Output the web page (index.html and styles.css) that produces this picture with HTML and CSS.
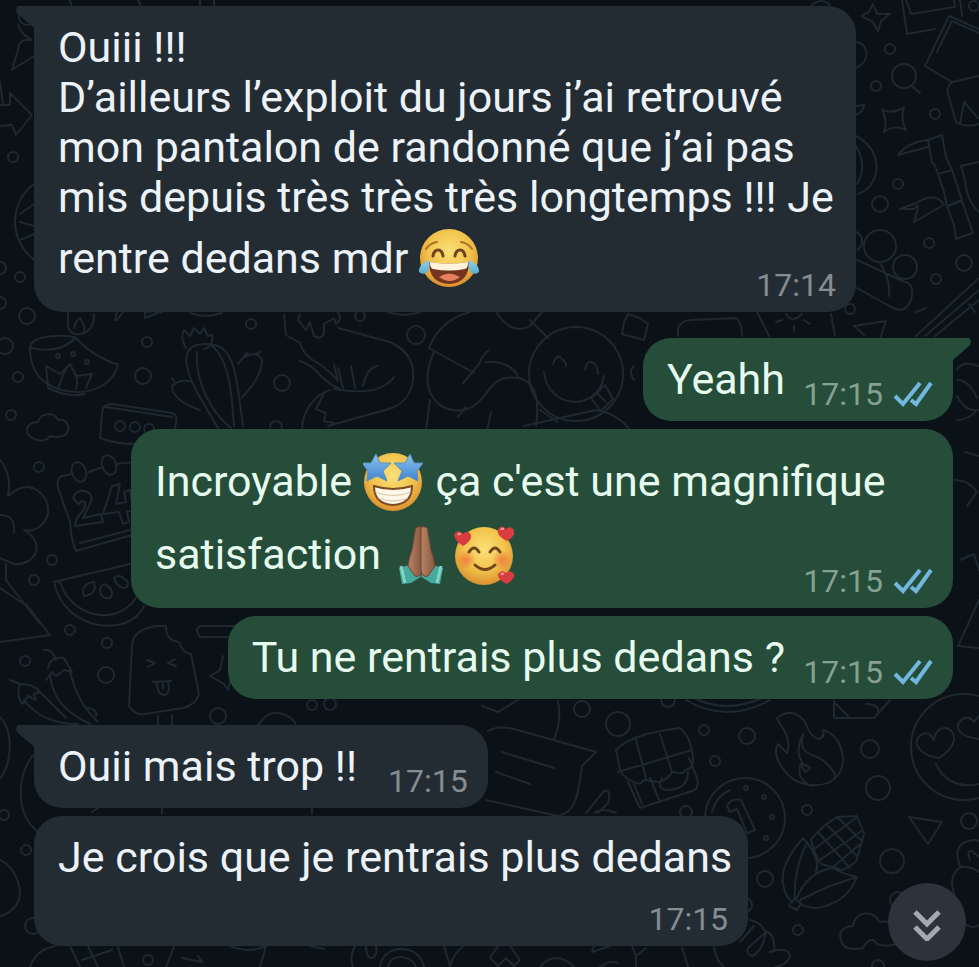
FILE: index.html
```html
<!DOCTYPE html>
<html lang="fr">
<head>
<meta charset="utf-8">
<meta name="viewport" content="width=device-width, initial-scale=1">
<title>Discussion</title>
<link rel="stylesheet" href="styles.css">
</head>
<body>
<svg class="wallpaper" viewBox="0 0 979 967" preserveAspectRatio="xMinYMin slice" aria-hidden="true">
  <!-- scattered dots -->
  <g>
    <circle cx="27" cy="17" r="8"/><circle cx="13" cy="157" r="5"/><circle cx="20" cy="277" r="5"/><circle cx="0" cy="268" r="6"/><circle cx="0" cy="303" r="6"/>
    <circle cx="27" cy="316" r="8"/><circle cx="5" cy="346" r="8"/><circle cx="147" cy="342" r="5"/><circle cx="143" cy="376" r="8"/><circle cx="18" cy="377" r="5"/>
    <circle cx="11" cy="415" r="5"/><circle cx="39" cy="467" r="5"/><circle cx="251" cy="324" r="5"/><circle cx="282" cy="383" r="8"/><circle cx="276" cy="427" r="6"/>
    <circle cx="52" cy="560" r="5"/><circle cx="34" cy="580" r="5"/><circle cx="70" cy="630" r="5"/><circle cx="107" cy="643" r="5"/><circle cx="25" cy="661" r="5"/>
    <circle cx="106" cy="675" r="8"/><circle cx="218" cy="716" r="8"/><circle cx="312" cy="705" r="5"/><circle cx="330" cy="704" r="6"/><circle cx="4" cy="815" r="5"/>
    <circle cx="26" cy="850" r="5"/><circle cx="33" cy="926" r="8"/><circle cx="148" cy="960" r="5"/><circle cx="360" cy="316" r="5"/><circle cx="416" cy="335" r="9"/>
    <circle cx="890" cy="49" r="5"/><circle cx="876" cy="86" r="5"/><circle cx="935" cy="114" r="5"/><circle cx="974" cy="6" r="5"/><circle cx="898" cy="184" r="5"/>
    <circle cx="880" cy="204" r="8"/><circle cx="929" cy="243" r="5"/><circle cx="964" cy="263" r="8"/><circle cx="936" cy="279" r="5"/><circle cx="850" cy="309" r="5"/>
    <circle cx="880" cy="246" r="16"/><circle cx="905" cy="267" r="12"/>
    <circle cx="582" cy="709" r="8"/><circle cx="618" cy="724" r="12"/><circle cx="704" cy="730" r="5"/><circle cx="747" cy="736" r="8"/><circle cx="715" cy="761" r="5"/>
    <circle cx="870" cy="749" r="9"/><circle cx="878" cy="788" r="12"/><circle cx="807" cy="810" r="5"/><circle cx="969" cy="821" r="8"/><circle cx="892" cy="861" r="12"/>
    <circle cx="765" cy="879" r="8"/><circle cx="798" cy="930" r="5"/><circle cx="686" cy="812" r="6"/><circle cx="745" cy="905" r="7"/><circle cx="668" cy="700" r="7"/>
    <circle cx="878" cy="966" r="6"/><circle cx="898" cy="900" r="8"/>
  </g>
  <!-- left edge, top -->
  <path d="M18 24q2 10 14 16M32 40q-14-2-14 10l-6 20 6-4q10-6 16-10M0 105l10 0 0-12 22 22-16 20-4-10-12 1M0 82l3 22M34 184c-20 14-30 50 0 76M34 204l-14 10m0 26 14-6M20 222l14 4"/>
  <path d="M70 0l2 8m66-8 4 8M200 0v8m14-8v8M812 5q10-8 18 0"/>
  <!-- bowl with lotus -->
  <path d="M30 348c0-14 40-14 46-10 18 20 40 26 42 26-4 20-24 28-40 28-22 0-48-10-48-44zM31 348q30 6 44-10M48 388l-2-22 14 8 10-10 6 12 16-2-6 14M58 389q8-24 12-24 10 12 6 24M48 388q20 10 36 6M68 312v14q3 10 12 8 14-2 14-20M74 328q2-8 6-10 6 8 4 14"/>
  <circle cx="58" cy="356" r="2"/><circle cx="73" cy="354" r="2"/><circle cx="87" cy="362" r="2"/>
  <!-- cloud, cassette -->
  <path d="M28 434c-4-10 6-12 10-12 2-10 18-10 20-2 12-2 14 14 4 16q-8 2-12 0c-6 8-18 4-22-2zM102 414q0-10 10-10l60 9q6 2 4 10l-4 18M102 414l-2 24q16 6 34 6M106 407l66 10"/>
  <circle cx="120" cy="426" r="5"/><circle cx="135" cy="427" r="5"/><circle cx="149" cy="429" r="5"/>
  <path d="M115 320l2-8m6 0-6 8m28-2 18-7-18 1zM190 313q14 6 32 0"/>
  <!-- cactus -->
  <path d="M186 348q-6-10-2-18l6 6 4-8 6 6 4-6 4 8 4-1q2 12-8 14M219 430l-22-38c-18-34-12-48 8-48 28 0 30 20 38 82M197 352c-2 30 14 60 34 76M212 346c20 16 20 60 22 80M192 382q-12-4-20 4c0 12 16 20 28 24M238 364c6-10 20-14 24-4 0 16-12 28-20 38M176 384l-4-6m72-22 4-4m8 2 4-2"/>
  <!-- calendar -->
  <path d="M72 474l-10 2q-6 3-4 12l12 34q1 18 6 29l56-16M80 543l54-14M89 472l14-5m13-3 18-2"/>
  <ellipse cx="79" cy="472" rx="7" ry="10" transform="rotate(-20 79 472)"/><ellipse cx="109" cy="465" rx="7" ry="10" transform="rotate(-20 109 465)"/>
  <path d="M73 498c4-12 22-8 18 4l-8 16 18-4 2 8-28 4c0-12 12-14 10-24q-4-2-6 2zM112 486l8-2-4 20 10-2-2-10 6-2 3 20-6 2 2 10-6 2-4-12-16 2z"/>
  <!-- clover and watermelon -->
  <path d="M0 460q12 14 8 36 22-20 38 4c8 20-10 34-22 30 24 14 10 36-10 34-6-2-14-6-14-6M0 515q16 0 14 18M6 564v16l34 44M0 588l24 16M54 582l76-18M54 582c10 50 76 56 90 24M60 582c10 34 56 46 76 16"/>
  <path d="M84 596q-4-12 10-14 4 12-10 14zM104 598q-8-8 0-14 12 6 6 14zM114 578q4-6 14 4 0 6-4 6-8-2-10-10zM26 604l24 31-50 7"/>
  <!-- peppers -->
  <path d="M44 650q8-2 12 10M48 668q2-12 16-10l8 14-8-2-8 6-4-4-6 8M50 674c2 30 24 42 40 50M70 672c8 30 18 40 28 50M10 680l10 4q14 0 20 8l-6 2 2 6-8-4-6 8q-6-10-2-20M24 700c12 16 30 24 54 24M40 692q14 14 26 26M88 708q10 2 8 8"/>
  <!-- ice lolly -->
  <path d="M166 626h-10q-24 4-24 20l-3 60q6 10 16 8l38-6q14-4 16-14l-8-40q-8 0-12-12-14-2-13-16M158 716v9m14-10v10M147 660l8 3-7 4m27-8-7 4 8 3M153 682l18-1M157 683q0 12 8 12 6-2 3-13M163 684v5"/>
  <path d="M234 626h-34q-6 4 0 11h34M223 656l-3 14-10 6 14 8 4 6 4-14M258 725q10-14 20-12 14 2 18 12"/>
  <!-- large rings near the lower left -->
  <path d="M0 717c14 14 12 46 0 62M33 755c-18 24-16 60 4 76M0 860c14 6 24 28 18 42-4 8-10 12-18 14M162 808v6m150-6v6M92 812l6-4"/>
  <path d="M30 967q6-18 26-21M70 946l10 21m8-21 10 21m20-20 6 20M82 960l30-10M166 967l8-20M182 958l20 4-4-6M230 946q20 8 36 0l-6 21M310 946l14 3M355 946q-6 10-2 21M366 946q0 12 6 12 6-2 4-12M380 967q2-16 20-18 20 0 24 18M388 967q2-10 12-10 12 0 16 10M444 946l6 20q4-14 14-20"/>
  <!-- flexed arm -->
  <path d="M284 315l2 20 14 8q4 14 18 20 14 10 20 18l-4-16M300 314l-2 6 8 10 4-8 4 14q6 4 10-2v-10l10-6 2 6q8-6 0-14M338 328l52 14c22 10 26 26 22 44-4 12-10 18-20 22l-64 18M300 361q12 4 20 14 10 10 20 14M338 368l5 20m8-22 4 22m8-2q4-18 14-20M334 389q46 8 60-12M330 390c-14 4-28 20-28 40M324 393l-8 16 10 4-2 8 10 2"/>
  <!-- fortune cookie -->
  <path d="M470 312q-30 8-41 36l45 25M463 383l16-19q4-10 10-14M434 352c-18 40 6 62 28 58 22-2 26-30 44-32 30-4 34 20 30 48M486 362c16-2 30 6 32 16M430 400l-4 30M458 417l8-10M491 412l-4 18M388 312q16 6 32 0M496 312q16 24 34 14l12-14M530 320l18 18M540 410l18 12"/>
  <!-- winking face -->
  <circle cx="576" cy="374" r="47"/><path d="M553 364q4-12 10-4 4 4 3 6M585 370q2-12 10-6 3 4 3 10M544 372c4 38 54 40 60 4M591 398l14-13 8 14-12 12zM598 394l8 8M524 426l72-16q22 4 34 20M624 322l4-8 12 4 8 6-4 16-22-6zM634 366q-6 4 0 14"/>
  <path d="M678 336v-8q4-8 14-8l44-2q6 4 6 18M757 312l12 24m62-22 4 22M854 326l32-5-6 18m-16-4-10-9M786 314q6 10 16 0m-20 6-6 2m18 4v5m10-11 6 4"/>
  <!-- photos and sparkles, top right -->
  <path d="M873 4l4 10 13 0-9 7-3 10-5-9-12-6 8-4zM902 0l5 34 28-5M906 0l5 14 44-7-1-7M960 0l2 16M925 66l24-50 30 13M937 52l15-31 27 12M925 66l27 16 27-6M952 82q-6 6-4 12l8 28q10 6 23 2M960 124l4-22 14 16"/>
  <circle cx="904" cy="76" r="12"/><path d="M912 86l8 7M882 110q10 4 22-2-4 12 2 22-12-6-22 2 4-12-2-22z"/>
  <path d="M856 42c14 2 14 20 0 26M856 106l8-1q0 6-8 10M856 136c28 14 26 50 2 58M856 146q12 20 1 38M857 232q10 8 1 18M857 260l48 22q10 2 6 18-6 14-18 8l-36-20M879 262q12 16 10 34"/>
  <!-- bamboo -->
  <path d="M928 140l14-5 4 22 6 13-14 4q-2-8-6-12zM938 174l14-4 10 30-15 6-3-14zM947 206l15-5 11 32-17 6-2-14zM928 140q-20 2-30 15l30-8M944 205q-8-14-28-2l-16 6 14 0 4-4M914 222l28-16M914 222l4-14M979 162l-18 4 4 14q2 22 14 32"/>
  <path d="M916 336l63-58m-54 58 54-46m-44 46 44-36m-10 4 6 8M916 312l10-4"/>
  <path d="M979 366q-18-6-22 4M957 396q8 16 22 14M957 380q12 0 20 18M957 420q12 0 20-10M965 452l14 4M955 480q14 0 22 12l-10 14M960 560l14-6 5 16M979 600l-21 46 21 2"/>
  <!-- whale tail -->
  <path d="M488 731q10-6 26-2l82 23-14 14c-4 30-6 46-24 50l-72-16M502 752l52 16m-58 4 34 12M558 701q4 20-4 38M482 706l16 6 20-12M586 813l18-22q8-2 4 12l-10 10m-4 0q8-6 22 0"/>
  <!-- gift box -->
  <path d="M616 750q14-16 64-22 12 10 13 32 0 8-7 10-3 5-14 2-4 8-14 10l-14-2-4 4q-16-4-20-14zM618 772l74-22M636 740l10 38m14-44 12 38M628 782l12 26 55-18q4-4 2-12l-8-20M650 778l10 24M662 778q-6 10 4 12 22 0 22-18M634 784l8 20"/>
  <!-- coin -->
  <circle cx="745" cy="818" r="40"/><path d="M712 812q4-16 18-22M727 806q4-8 14-6l14 30-8 3-10-24-7 3z"/><circle cx="746" cy="788" r="2"/><circle cx="764" cy="797" r="2"/><circle cx="772" cy="817" r="2"/><circle cx="766" cy="838" r="2"/><path d="M686 700q40 24 84 0M696 699q30 14 64 0"/>
  <!-- flame -->
  <path d="M777 718q16-12 28 4 6 16 14 17 6-2 4-9c20 6 24 32 16 44-12 16-38 14-52 0-10-12-14-22-9-30l9 9c6-16-8-28-10-35zM803 734c-6 24 14 18 24 30q10 10 8 14M803 734c-6 14-6 20 0 30l8 4-6 4-4-8q-6 14 10 22"/>
  <path d="M834 700v18h40l16-18M866 704q14 0 12 10M836 704l12 12"/>
  <!-- heart-eyed face -->
  <circle cx="964" cy="747" r="53"/><path d="M939 758c-16-2-30-14-18-23q8-5 13 5c2-18 22-14 20 0q-2 10-15 18zM979 739c-18-2-26-10-18-19q8-5 13 2l5-6M936 764c8 18 24 24 43 20"/>
  <!-- corn -->
  <path d="M811 839l14-14 12-8 20-1 7 18-8 28-13 8-22-6q-8-12-10-25zM818 832l32 36M826 824l31 32M837 817l25 24M813 850l44-33M817 862l46-32M832 868l28-24M803 838q-26 30-19 50 2 10 9 14M803 838q18 20 13 34M807 842q-14 30-12 58M797 898q10-26 36-30 10 6 24 9-10 26-40 31-10 0-17-4M800 900q16-8 30-14l27-9M794 899l7 4-4 7-8-4z"/>
  <path d="M909 817l33 5-14 22zM960 866q-8-20 8-25 8-2 11 0M970 860q-4-10 2-9l7 6M960 867q-12 10-6 26M979 872q-8-6-19-5M966 925q8 4 13 0M841 940c-4-12 8-14 12-14 2-16 22-16 26-4 8-2 14 2 16 6M841 940q2 12 22 8 8-14 14-4 14 4 22-2"/>
  <!-- hand, lower edge -->
  <path d="M750 920q10 2 14 10 10 4 10 14 2 8-4 8 18-6 20 4-2 8-14 11M740 942l14-16m-6 22 18-16q-4 20-14 24-6-2-4-8M714 947q2 14 10 20M682 947l6 20M594 946l-2 6 18-6M632 946l4 10 10-8M636 956v11M490 958l8-12m12 0 10 14-6 6-8-8-8 8-8-8M540 967q16-18 34 0M600 967q10-8 18-4"/>
</svg>

<main class="chat">
  <section class="group incoming">
    <article class="bubble tailed">
      <svg class="tail" viewBox="0 0 18 22" aria-hidden="true"><path d="M18 0H2Q-1 2 1 7L18 22z"/></svg>
      <p class="text">Ouiii !!!<br>D’ailleurs l’exploit du jours j’ai retrouvé mon pantalon de randonné que j’ai pas mis depuis très très très longtemps !!! Je rentre dedans mdr
        <svg class="emoji" viewBox="0 0 60 60" role="img" aria-label="😂">
          <defs>
            <radialGradient id="face" cx="50%" cy="38%" r="65%"><stop offset="0" stop-color="#fbe078"/><stop offset=".55" stop-color="#f2c44d"/><stop offset="1" stop-color="#d98a2b"/></radialGradient>
            <linearGradient id="tear" x1="0" y1="0" x2="0" y2="1"><stop offset="0" stop-color="#8fd0e6"/><stop offset="1" stop-color="#5aaed0"/></linearGradient>
          </defs>
          <circle cx="30" cy="29" r="29" fill="url(#face)"/>
          <path d="M7 20q4-6 11-7M42 13q7 1 11 7" fill="none" stroke="#a87329" stroke-width="2" stroke-linecap="round"/>
          <path d="M14 27q1-6 5-6t5 6M36 27q1-6 5-6t5 6" fill="none" stroke="#70441c" stroke-width="3" stroke-linecap="round"/>
          <path d="M10 33q20 3 40 0 0 21-20 22-20-1-20-22z" fill="#74341f"/>
          <path d="M11 33q19 3 38 0 0 6-3 7-16 3-32 0-3-1-3-7z" fill="#fff3dc"/>
          <path d="M20 48q10-7 21 0-10 8-21 0z" fill="#e5805c"/>
          <path d="M10 31q2 9-3 13-4 2-7-1-1-7 10-12zM50 31q-2 9 3 13 4 2 7-1 1-7-10-12z" fill="url(#tear)"/>
        </svg><span class="reserve"></span></p>
      <time class="stamp">17:14</time>
    </article>
  </section>

  <section class="group outgoing">
    <article class="bubble tailed">
      <svg class="tail" viewBox="0 0 18 22" aria-hidden="true"><path d="M0 0H16Q19 2 17 7L0 22z"/></svg>
      <p class="text">Yeahh<span class="reserve"></span></p>
      <div class="stamp"><time>17:15</time><svg class="ticks" viewBox="0 0 40 26" role="img" aria-label="Lu"><path d="M2 15l8 8L27 2M18 19l5 4L38 2"/></svg></div>
    </article>
    <article class="bubble">
      <p class="text">Incroyable
        <svg class="emoji" viewBox="0 0 60 60" role="img" aria-label="🤩">
          <defs><linearGradient id="star" x1="0" y1="0" x2="0" y2="1"><stop offset="0" stop-color="#8cc4ee"/><stop offset="1" stop-color="#3f83cf"/></linearGradient></defs>
          <circle cx="30" cy="30" r="29" fill="url(#face)"/>
          <path d="M11 34q19 6 38 0 0 18-19 19-19-1-19-19z" fill="#fff8ea" stroke="#7b4a20" stroke-width="2"/>
          <path d="M12 40q18 7 36 0M15 46q15 6 30 0" fill="none" stroke="#d9c5a6"/>
          <path d="M13 2l4 9 11 0-8 8 4 10-10-5-10 5 1-10-6-8 9 0z" fill="url(#star)" stroke="#5b91ba"/>
          <path d="M47 2l4 9 9 0-6 8 1 10-10-5-10 5 4-10-8-8 11 0z" fill="url(#star)" stroke="#5b91ba"/>
        </svg>
        ça c'est une magnifique satisfaction
        <svg class="emoji" viewBox="0 0 60 60" role="img" aria-label="🙏🏽">
          <defs><linearGradient id="skin" x1="0" x2="1"><stop offset="0" stop-color="#b98467"/><stop offset="1" stop-color="#87573f"/></linearGradient></defs>
          <path d="M7 43l10-3 13 11-11 7-9 1zM51 43l-10-3-13 11 11 7 9 1z" fill="#45a99b"/>
          <path d="M30 4q-1-4-4-2-3 0-3 5l-3 18q-3 7-4 16l7 10q6 2 7-6z" fill="url(#skin)" stroke="#6c4432"/>
          <path d="M29 4q1-4 4-2 3 0 3 5l3 18q3 7 4 16l-7 10q-6 2-7-6z" fill="url(#skin)" stroke="#6c4432"/>
          <path d="M9 41l4 17M49 41l-4 17" stroke="#83d4c4" stroke-width="3"/>
        </svg><svg class="emoji" viewBox="0 0 60 60" role="img" aria-label="🥰">
          <defs><radialGradient id="blush"><stop offset="0" stop-color="#f0713a" stop-opacity=".8"/><stop offset="1" stop-color="#f0713a" stop-opacity="0"/></radialGradient></defs>
          <circle cx="30" cy="31" r="29" fill="url(#face)"/>
          <circle cx="12" cy="35" r="10" fill="url(#blush)"/><circle cx="48" cy="35" r="10" fill="url(#blush)"/>
          <path d="M15 27q5-8 10 0M36 27q5-8 10 0M21 40q10 9 20 0" fill="none" stroke="#70441c" stroke-width="3" stroke-linecap="round"/>
          <g fill="#d83c3f"><path d="M9 21Q-2 14 1 8q4-4 8 1 5-5 8 1 1 6-8 11z"/><path d="M53 16q-11-5-9-12 4-5 8 0 5-4 8 1 2 6-7 11z"/><path d="M53 59q-10-5-9-10 4-5 8-1 5-4 8 1 1 5-7 10z"/></g>
          <path d="M4 10q1-2 3-1M47 5q1-2 3-1M47 50q1-2 3-1" fill="none" stroke="#f59a93" stroke-width="2"/>
        </svg><span class="reserve"></span></p>
      <div class="stamp"><time>17:15</time><svg class="ticks" viewBox="0 0 40 26" role="img" aria-label="Lu"><path d="M2 15l8 8L27 2M18 19l5 4L38 2"/></svg></div>
    </article>
    <article class="bubble">
      <p class="text">Tu ne rentrais plus dedans ?<span class="reserve"></span></p>
      <div class="stamp"><time>17:15</time><svg class="ticks" viewBox="0 0 40 26" role="img" aria-label="Lu"><path d="M2 15l8 8L27 2M18 19l5 4L38 2"/></svg></div>
    </article>
  </section>

  <section class="group incoming">
    <article class="bubble tailed">
      <svg class="tail" viewBox="0 0 18 22" aria-hidden="true"><path d="M18 0H2Q-1 2 1 7L18 22z"/></svg>
      <p class="text">Ouii mais trop !!&nbsp;<span class="reserve"></span></p>
      <time class="stamp">17:15</time>
    </article>
    <article class="bubble stacked">
      <p class="text">Je crois que je rentrais plus dedans</p>
      <time class="stamp">17:15</time>
    </article>
  </section>
</main>

<button class="jump" type="button" aria-label="Aller aux derniers messages">
  <svg viewBox="0 0 28 32" aria-hidden="true"><path d="M2 3l12 12L26 3M2 18l12 12 12-12"/></svg>
</button>
</body>
</html>
```

FILE: styles.css
```css
* {
  box-sizing: border-box;
}

body {
  margin: 0;
  min-height: 100vh;
  overflow: hidden;
  position: relative;
  background: #0a1218;
  color: #ecf3f8;
  font-family: Roboto, "Noto Sans", sans-serif;
}

.wallpaper {
  position: absolute;
  inset: 0;
  width: 100%;
  height: 100%;
  fill: none;
  stroke: #1f282e;
  stroke-width: 2;
  stroke-linejoin: round;
  stroke-linecap: round;
}

.chat {
  position: relative;
  display: flex;
  flex-direction: column;
  gap: 26px;
  padding: 6px 26px 20px 34px;
}

.group {
  display: flex;
  flex-direction: column;
  gap: 8px;
}

.incoming {
  --bubble: #242c33;
  --stamp: #858d92;
  --reserve: 104px;
  align-items: flex-start;
}

.outgoing {
  --bubble: #254d3a;
  --stamp: #86a193;
  --reserve: 152px;
  align-items: flex-end;
  color: #e6fbee;
}

.bubble {
  position: relative;
  display: grid;
  max-width: 822px;
  border-radius: 28px;
  background: var(--bubble);
}

.incoming .tailed {
  border-top-left-radius: 0;
}

.outgoing .tailed {
  border-top-right-radius: 0;
}

.tail {
  position: absolute;
  top: 0;
  width: 18px;
  height: 22px;
  fill: var(--bubble);
}

.incoming .tail {
  right: 100%;
}

.outgoing .tail {
  left: 100%;
}

.text {
  grid-area: 1 / 1;
  margin: 0;
  padding: 16px 16px 17px 24px;
  font-size: 43px;
  line-height: 50px;
}

.reserve {
  display: inline-block;
  width: var(--reserve);
}

.stamp {
  grid-area: 1 / 1;
  place-self: end;
  display: flex;
  align-items: center;
  gap: 10px;
  margin: 0 20px 7px 0;
  color: var(--stamp);
  font-size: 32px;
  line-height: 40px;
}

.stacked .stamp {
  grid-row: 2;
}

.emoji {
  width: 60px;
  height: 60px;
  margin: 7px 2px 6px 0;
  vertical-align: -22px;
}

.ticks {
  width: 40px;
  height: 26px;
  fill: none;
  stroke: #71b7de;
  stroke-width: 4;
}

.jump {
  position: absolute;
  right: 13px;
  bottom: 6px;
  display: grid;
  place-items: center;
  width: 78px;
  height: 78px;
  padding: 0;
  border: 0;
  border-radius: 50%;
  background: #2c333b;
}

.jump svg {
  width: 28px;
  height: 32px;
  margin-top: 6px;
  fill: none;
  stroke: #a2a9b1;
  stroke-width: 5;
}
```
